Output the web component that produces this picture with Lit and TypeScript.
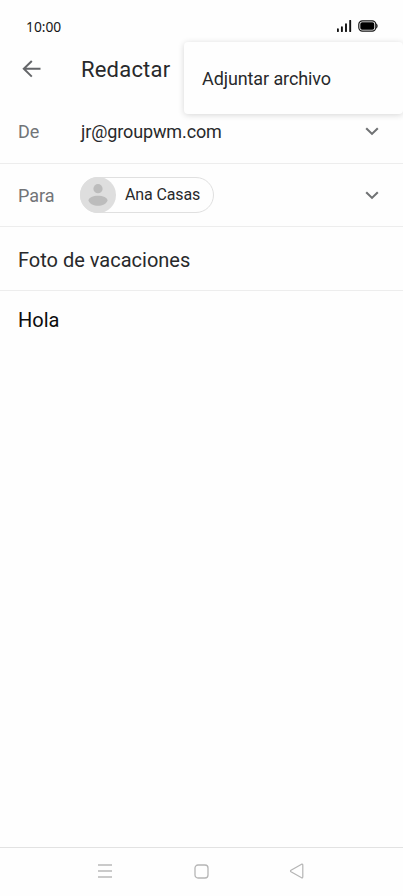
import { LitElement, html, css } from "lit";
import { customElement } from "lit/decorators.js";

const chevron = html`<svg class="chevron" width="14" height="9" viewBox="0 0 14 9">
  <path d="M1.2 1.2 7 6.9l5.8-5.7" fill="none" stroke="#707274" stroke-width="2.1" />
</svg>`;

@customElement("app-root")
export class AppRoot extends LitElement {
  static styles = css`
    :host {
      display: flex;
      flex-direction: column;
      position: relative;
      box-sizing: border-box;
      height: 896px;
      overflow: hidden;
      background: #fefefe;
      color: #28292b;
      font-family: Roboto, sans-serif;
      white-space: nowrap;
    }
    svg { display: block; flex: none; }
    .status {
      display: flex;
      align-items: center;
      height: 42px;
      padding: 10px 25px 0 26px;
      box-sizing: border-box;
    }
    .time {
      flex: 1;
      padding-top: 1px;
      font: 13.8px/20px "Noto Sans", sans-serif;
      color: #161616;
    }
    .bar {
      display: flex;
      align-items: center;
      height: 58px;
      box-sizing: border-box;
      padding: 0 0 4px 22px;
    }
    .title {
      margin: 1px 0 0 40px;
      font-weight: 400;
      font-size: 22px;
      line-height: 28px;
      letter-spacing: 0.2px;
    }
    .row {
      display: flex;
      align-items: center;
      box-sizing: border-box;
      height: 63px;
      padding: 0 24px 0 18px;
      border-bottom: 1px solid #ededed;
      font-size: 18px;
    }
    .from { height: 64px; }
    .label { width: 63px; color: #727477; }
    .value { flex: 1; letter-spacing: -0.12px; }
    .chip {
      display: flex;
      align-items: center;
      box-sizing: border-box;
      width: 134px;
      height: 36px;
      margin: 0 auto 1px -1px;
      border: 1px solid #e0e0e0;
      border-radius: 18px;
      font-size: 16px;
      letter-spacing: -0.12px;
    }
    .avatar { margin: 0 9px 0 -1px; }
    .subject { height: 64px; padding-top: 2px; font-size: 20px; }
    .body {
      flex: 1;
      padding: 17px 18px;
      font-size: 20px;
      line-height: 24px;
      color: #0c0c0c;
    }
    .nav {
      display: flex;
      align-items: center;
      justify-content: space-between;
      box-sizing: border-box;
      height: 49px;
      padding: 0 98px 2px 97px;
      border-top: 1px solid #e2e2e2;
    }
    .menu {
      position: absolute;
      top: 42px;
      left: 184px;
      right: 0;
      height: 72px;
      box-sizing: border-box;
      padding: 0 18px;
      border-radius: 4px;
      background: #fefefe;
      box-shadow: 0 1px 6px rgba(0, 0, 0, 0.16);
      font-size: 18px;
      line-height: 73px;
      letter-spacing: -0.1px;
    }
  `;

  render() {
    return html`
      <div class="status">
        <span class="time">10:00</span>
        <svg width="41" height="12" viewBox="0 0 41 12">
          <path d="M.9 11.2V9.2M4.9 11.2V7.2M9 11.2V4.2M13.2 11.2V.8" stroke="#111" stroke-width="1.9" stroke-linecap="round" />
          <rect x="21.8" y=".8" width="17" height="10.4" rx="3.6" fill="#fff" stroke="#161616" stroke-width="1.2" />
          <rect x="23.3" y="2.3" width="14" height="7.4" rx="1.8" fill="#000" />
          <path d="M39.5 3.8q1.4 2.2 0 4.4" fill="#161616" stroke="#161616" />
        </svg>
      </div>
      <div class="bar">
        <svg width="19" height="18" viewBox="0 0 19 18">
          <path d="M18.5 8.8H2M9.8 1 1.8 8.8l8 7.8" fill="none" stroke="#646669" stroke-width="2" />
        </svg>
        <h1 class="title">Redactar</h1>
      </div>
      <div class="row from">
        <span class="label">De</span>
        <span class="value">jr@groupwm.com</span>
        ${chevron}
      </div>
      <div class="row">
        <span class="label">Para</span>
        <div class="chip">
          <svg class="avatar" width="36" height="36" viewBox="0 0 36 36">
            <circle cx="18" cy="18" r="18" fill="#dedede" />
            <circle cx="18" cy="11.7" r="4.6" fill="#bcbcbc" />
            <path d="M8.5 23.5C8.5 17 27.5 17 27.5 23.5 25.5 30.5 10.5 30.5 8.5 23.5Z" fill="#bcbcbc" />
          </svg>
          <span>Ana Casas</span>
        </div>
        ${chevron}
      </div>
      <div class="row subject">Foto de vacaciones</div>
      <div class="body">Hola</div>
      <div class="nav">
        <svg width="16" height="14" viewBox="0 0 16 14">
          <path d="M1 1h14M1 7h14M1 13h14" stroke="#b9b9b9" stroke-width="1.3" />
        </svg>
        <svg width="15" height="15" viewBox="0 0 15 15">
          <rect x="1" y="1" width="13" height="13" rx="3" fill="none" stroke="#b5b5b5" stroke-width="1.3" />
        </svg>
        <svg width="16" height="16" viewBox="0 0 16 16">
          <path d="M12.6 1.2 2 7.2q-1 .8 0 1.6l10.6 6q1.2.3 1.2-1V2.200q0-1.300-1.200-1Z" fill="none" stroke="#b5b5b5" stroke-width="1.2" />
        </svg>
      </div>
      <div class="menu">Adjuntar archivo</div>
    `;
  }
}
